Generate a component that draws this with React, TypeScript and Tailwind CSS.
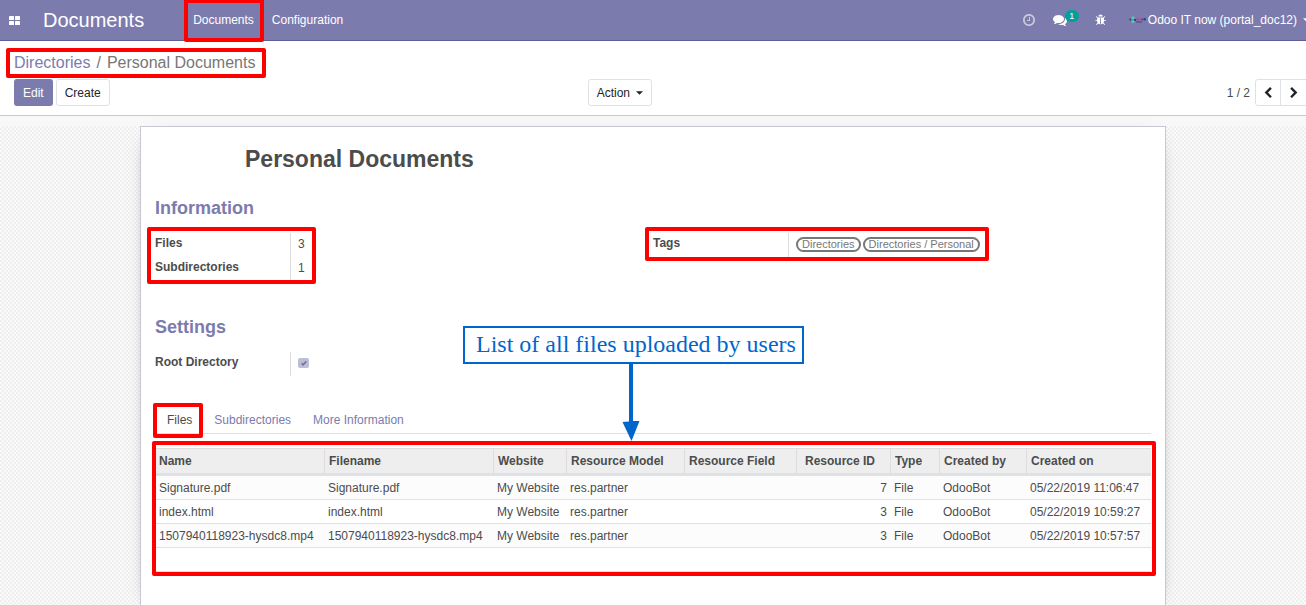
import React, { useState } from "react";

type IconProps = { d: string; className?: string };

function Glyph({ d, className }: IconProps) {
  return (
    <svg viewBox="0 0 1792 1792" fill="currentColor" aria-hidden="true" className={className}>
      <path d={d} />
    </svg>
  );
}

const CLOCK =
  "M1024 544v448q0 14-9 23t-23 9h-320q-14 0-23-9t-9-23v-64q0-14 9-23t23-9h224v-352q0-14 9-23t23-9h64q14 0 23 9t9 23zm416 352q0-148-73-273t-198-198-273-73-273 73-198 198-73 273 73 273 198 198 273 73 273-73 198-198 73-273zm224 0q0 209-103 385.5t-279.5 279.5-385.5 103-385.5-103-279.5-279.5-103-385.5 103-385.5 279.5-279.5 385.5-103 385.5 103 279.5 279.5 103 385.5z";
const COMMENTS =
  "M1408 768q0 139-94 257t-256.5 186.5-353.5 68.5q-86 0-176-16-124 88-278 128-36 9-86 16h-3q-11 0-20.5-8t-11.5-21q-1-3-1-6.5t.5-6.5 2-6l2.5-5 3.5-5.5 4-5 4.5-5 4-4.5q5-6 23-25t26-29.5 22.5-29 25-38.5 20.5-44q-124-72-195-177t-71-224q0-139 94-257t256.5-186.5 353.5-68.5 353.5 68.5 256.5 186.5 94 257zm384 256q0 120-71 224.5t-195 176.5q10 24 20.5 44t25 38.5 22.5 29 26 29.5 23 25q1 1 4 4.5t4.5 5 4 5 3.5 5.5l2.5 5 2 6 .5 6.5-1 6.5q-3 14-13 22t-22 7q-50-7-86-16-154-40-278-128-90 16-176 16-271 0-472-132 58 4 88 4 161 0 309-45t264-129q125-92 192-212t67-254q0-77-23-152 129 71 204 178t75 230z";
const BUG =
  "M1632 960q0 26-19 45t-45 19h-224q0 171-67 290l208 209q19 19 19 45t-19 45q-18 19-45 19t-45-19l-198-197q-5 5-15 13t-42 28.5-65 36.5-82 29-97 13v-896h-128v896q-51 0-101.5-13.5t-87-33-66-39-43.5-32.5l-15-14-183 207q-20 21-48 21-24 0-43-16-19-18-20.5-44.5t15.5-46.5l202-227q-58-114-58-274h-224q-26 0-45-19t-19-45 19-45 45-19h224v-294l-173-173q-19-19-19-45t19-45 45-19 45 19l173 173h844l173-173q19-19 45-19t45 19 19 45-19 45l-173 173v294h224q26 0 45 19t19 45zm-480-576h-640q0-133 93.5-226.5t226.5-93.5 226.5 93.5 93.5 226.5z";
const CHEVRON_LEFT =
  "M1427 301l-531 531 531 531q19 19 19 45t-19 45l-166 166q-19 19-45 19t-45-19l-742-742q-19-19-19-45t19-45l742-742q19-19 45-19t45 19l166 166q19 19 19 45t-19 45z";
const CHEVRON_RIGHT =
  "M1363 877l-742 742q-19 19-45 19t-45-19l-166-166q-19-19-19-45t19-45l531-531-531-531q-19-19-19-45t19-45l166-166q19-19 45-19t45 19l742 742q19 19 19 45t-19 45z";

function Caret() {
  return (
    <svg viewBox="0 0 8 4" fill="currentColor" aria-hidden="true" className="h-1 w-[7px] shrink-0">
      <path d="M0 0h8L4 4z" />
    </svg>
  );
}

/* Red highlight frame laid over a part of the page. */
function Mark({ className }: { className: string }) {
  return (
    <span
      aria-hidden="true"
      className={`pointer-events-none absolute rounded-[2px] border-4 border-[#ff0000] ${className}`}
    />
  );
}

function TopBar() {
  return (
    <header className="flex h-[41px] items-center border-b border-[#5f5e97] bg-[#7c7bad] text-white">
      <button type="button" aria-label="Apps" className="ml-[9px] shrink-0">
        <svg viewBox="0 0 11 9" fill="currentColor" className="h-[9px] w-[11px]">
          <rect width="5" height="4" rx="0.6" />
          <rect x="6" width="5" height="4" rx="0.6" />
          <rect y="5" width="5" height="4" rx="0.6" />
          <rect x="6" y="5" width="5" height="4" rx="0.6" />
        </svg>
      </button>
      <a href="#home" className="ml-[23px] text-xl leading-10">
        Documents
      </a>
      <nav className="ml-10 flex leading-[42px]">
        <a href="#documents" className="relative px-[9px]">
          Documents
          <Mark className="-right-px bottom-[-1px] left-0 top-0 rounded-t-none" />
        </a>
        <a href="#configuration" className="px-[9px]">
          Configuration
        </a>
      </nav>
      <div className="-mr-1 ml-auto flex items-center">
        <button type="button" aria-label="Activities" className="opacity-60">
          <Glyph d={CLOCK} className="size-[14px]" />
        </button>
        <button type="button" aria-label="Messages" className="relative ml-[17px] mr-[28px]">
          <Glyph d={COMMENTS} className="size-[14px]" />
          <span className="absolute -top-[3px] left-3 flex h-3 w-[14px] items-center justify-center rounded-full bg-[#00a09d] text-[9px] leading-3">
            1
          </span>
        </button>
        <button type="button" aria-label="Debug" className="mr-[22px]">
          <Glyph d={BUG} className="size-3" />
        </button>
        <button type="button" className="flex items-center leading-[42px]">
          <svg viewBox="0 0 17 8" aria-hidden="true" className="mr-[2px] h-2 w-[17px]">
            <circle cx="1.3" cy="3.5" r="1.1" fill="#3c3f86" />
            <path d="M4 0l2 2-2 1.5L2 2zM4 4l2 1.5-2 2-2-2z" fill="#4fd0b4" />
            <path d="M5 3h2v2H5z" fill="#35407f" />
            <circle cx="8.4" cy="3.2" r="1.2" fill="#b04a8c" />
            <circle cx="11" cy="3.2" r="1.2" fill="#c2508a" />
            <circle cx="13.2" cy="3.4" r="1" fill="#5a3f96" />
            <circle cx="15.7" cy="3.2" r="1.2" fill="#33377f" />
            <path d="M7 6h6" stroke="#454488" />
          </svg>
          <span className="whitespace-nowrap">Odoo IT now (portal_doc12)</span>
          <span className="ml-[6px] flex">
            <Caret />
          </span>
        </button>
      </div>
    </header>
  );
}

function ControlPanel() {
  return (
    <section className="border-b border-[#cacaca] bg-white pb-[9px] pt-[10px]">
      <div className="flex pl-[14px]">
        <nav className="relative text-base leading-6 text-[#777777]">
          <a href="#directories" className="text-[#7c7bad]">
            Directories
          </a>
          <span className="px-[6px]">/</span>
          <span>Personal Documents</span>
          <Mark className="-left-2 -right-[11px] -top-[3px] bottom-[-3px]" />
        </nav>
      </div>
      <div className="mt-1 grid grid-cols-[45%_1fr]">
        <div className="flex gap-[3px] pl-[14px]">
          <button type="button" className="h-[27px] rounded-[3px] bg-[#7c7bad] px-[9px] text-white">
            Edit
          </button>
          <button
            type="button"
            className="h-[27px] rounded-[3px] border border-[#dee2e6] bg-white px-2 text-[#212529]"
          >
            Create
          </button>
        </div>
        <div className="flex items-center justify-between">
          <button
            type="button"
            className="flex h-[27px] items-center gap-[6px] rounded-[3px] border border-[#dee2e6] bg-white px-2 text-[#212529]"
          >
            Action
            <Caret />
          </button>
          <div className="-mr-px flex items-center">
            <span className="mr-[5px]">1 / 2</span>
            <button
              type="button"
              aria-label="Previous"
              className="flex h-[27px] w-[26px] items-center justify-center rounded-l-[3px] border border-[#dee2e6] text-[#212529]"
            >
              <Glyph d={CHEVRON_LEFT} className="size-3" />
            </button>
            <button
              type="button"
              aria-label="Next"
              className="-ml-px flex h-[27px] w-[27px] items-center justify-center border border-[#dee2e6] text-[#212529]"
            >
              <Glyph d={CHEVRON_RIGHT} className="size-3" />
            </button>
          </div>
        </div>
      </div>
    </section>
  );
}

function Field({ label, children }: { label: string; children: React.ReactNode }) {
  return (
    <div className="flex h-6 leading-5">
      <dt className="w-[135px] shrink-0 font-bold">{label}</dt>
      <dd className="flex h-full items-center border-l border-[#dddddd] pb-[2px] pl-[7px]">{children}</dd>
    </div>
  );
}

function Tag({ children }: { children: React.ReactNode }) {
  return (
    <span className="flex h-[15px] items-center whitespace-nowrap rounded-full border-2 border-[#777777] px-1 text-[11px] leading-[11px] text-[#777777]">
      {children}
    </span>
  );
}

const COLUMNS = [
  { title: "Name", width: "w-[169px]" },
  { title: "Filename", width: "w-[169px]" },
  { title: "Website", width: "w-[73px]" },
  { title: "Resource Model", width: "w-[118px]" },
  { title: "Resource Field", width: "w-[112px]" },
  { title: "Resource ID", width: "w-[94px]" },
  { title: "Type", width: "w-[49px]" },
  { title: "Created by", width: "w-[87px]" },
  { title: "Created on", width: "w-[125px]" },
];

const ROWS = [
  ["Signature.pdf", "Signature.pdf", "My Website", "res.partner", "", "7", "File", "OdooBot", "05/22/2019 11:06:47"],
  ["index.html", "index.html", "My Website", "res.partner", "", "3", "File", "OdooBot", "05/22/2019 10:59:27"],
  [
    "1507940118923-hysdc8.mp4",
    "1507940118923-hysdc8.mp4",
    "My Website",
    "res.partner",
    "",
    "3",
    "File",
    "OdooBot",
    "05/22/2019 10:57:57",
  ],
];

function FilesTable() {
  return (
    <div className="relative mt-[14px]">
      <table className="w-full table-fixed border-separate border-spacing-0 whitespace-nowrap">
        <thead>
          <tr className="bg-[#eeeeee]">
            {COLUMNS.map((c, i) => (
              <th
                key={c.title}
                className={`${c.width} h-7 border-b-[3px] border-t border-b-[#dee2e6] border-t-[#dddddd] font-bold ${
                  i > 0 ? "border-l border-l-[#dddddd]" : ""
                } ${i === 5 ? "pr-[15px] text-right" : "pl-1 text-left"}`}
              >
                {c.title}
              </th>
            ))}
          </tr>
        </thead>
        <tbody>
          {ROWS.map((row, r) => (
            <tr key={r} className="odd:bg-[#fcfcfc]">
              {row.map((cell, i) => (
                <td
                  key={i}
                  className={`h-6 border-b border-[#dee2e6] ${i === 5 ? "pr-[3px] text-right" : "pl-1"}`}
                >
                  {cell}
                </td>
              ))}
            </tr>
          ))}
          <tr>
            <td colSpan={9} className="h-6 border-b border-[#dee2e6]" />
          </tr>
        </tbody>
      </table>
      <Mark className="-bottom-1 -left-[3px] -right-[5px] -top-[7px]" />
    </div>
  );
}

function Callout() {
  return (
    <div className="pointer-events-none absolute left-[322px] top-[199px] z-10">
      <p className="whitespace-nowrap border-2 border-[#0066cc] bg-white pb-[3px] pl-[11px] pr-[6px] pt-px font-['Liberation_Serif',serif] text-2xl leading-[30px] text-[#0066cc]">
        List of all files uploaded by users
      </p>
      <svg viewBox="0 0 18 77" fill="#0066cc" aria-hidden="true" className="ml-[159px] h-[77px] w-[18px]">
        <path d="M7 0h4v57h6.500L9.500 77 .5 58l6.500-.5z" />
      </svg>
    </div>
  );
}

const TABS = ["Files", "Subdirectories", "More Information"];

export default function App() {
  const [tab, setTab] = useState("Files");
  return (
    <div className="flex min-h-screen flex-col overflow-x-hidden bg-[#f8f8f8] font-['Liberation_Sans',Arial,sans-serif] text-xs text-[#4c4c4c]">
      <TopBar />
      <ControlPanel />
      <main className="mt-[10px] flex grow bg-[repeating-conic-gradient(#efefef_0_25%,#fafafa_0_50%)] bg-[length:4px_4px]">
        <div className="relative mx-auto w-full max-w-[1026px] border border-b-0 border-[#c8c8d3] bg-white px-[14px] pb-8 pt-[17px] shadow-[0_5px_20px_-15px_#000]">
          <h1 className="pl-[90px] text-[23px] font-bold leading-[30px]">Personal Documents</h1>

          <h2 className="mt-[22px] text-lg font-bold leading-6 text-[#7c7bad]">Information</h2>
          <div className="mt-[13px] grid grid-cols-2 items-start">
            <dl className="relative">
              <Field label="Files">3</Field>
              <Field label="Subdirectories">1</Field>
              <Mark className="-bottom-[3px] -left-2 -top-[6px] w-[169px]" />
            </dl>
            <dl className="relative">
              <Field label="Tags">
                <span className="flex gap-[2px]">
                  <Tag>Directories</Tag>
                  <Tag>Directories / Personal</Tag>
                </span>
              </Field>
              <Mark className="-bottom-1 -left-2 -top-[6px] w-[344px]" />
            </dl>
          </div>

          <h2 className="mt-[34px] text-lg font-bold leading-6 text-[#7c7bad]">Settings</h2>
          <div className="mt-[13px] flex h-6 leading-5">
            <label htmlFor="root" className="w-[135px] shrink-0 font-bold">
              Root Directory
            </label>
            <span className="flex items-center border-l border-[#dddddd] pb-[2px] pl-[7px]">
              <span className="relative flex">
                <input
                  id="root"
                  type="checkbox"
                  checked
                  readOnly
                  className="h-[10px] w-[11px] appearance-none rounded-[2px] bg-[#bdbdd6]"
                />
                <svg
                  viewBox="0 0 11 10"
                  fill="none"
                  stroke="#7371a6"
                  strokeWidth="1.6"
                  aria-hidden="true"
                  className="pointer-events-none absolute inset-0"
                >
                  <path d="M3.500 5.200l1.600 1.600 3.200-3.400" />
                </svg>
              </span>
            </span>
          </div>

          <div role="tablist" className="mt-[30px] flex h-7 border-b border-[#dee2e6] pl-px">
            {TABS.map((t) => (
              <button
                key={t}
                type="button"
                role="tab"
                aria-selected={tab === t}
                onClick={() => setTab(t)}
                className={`relative px-[11px] ${tab === t ? "text-[#4c4c4c]" : "text-[#7c7bad]"}`}
              >
                {t}
                {t === "Files" && <Mark className="-bottom-[5px] -left-[3px] -top-[3px] right-0" />}
              </button>
            ))}
          </div>
          <FilesTable />
          <Callout />
        </div>
      </main>
    </div>
  );
}
